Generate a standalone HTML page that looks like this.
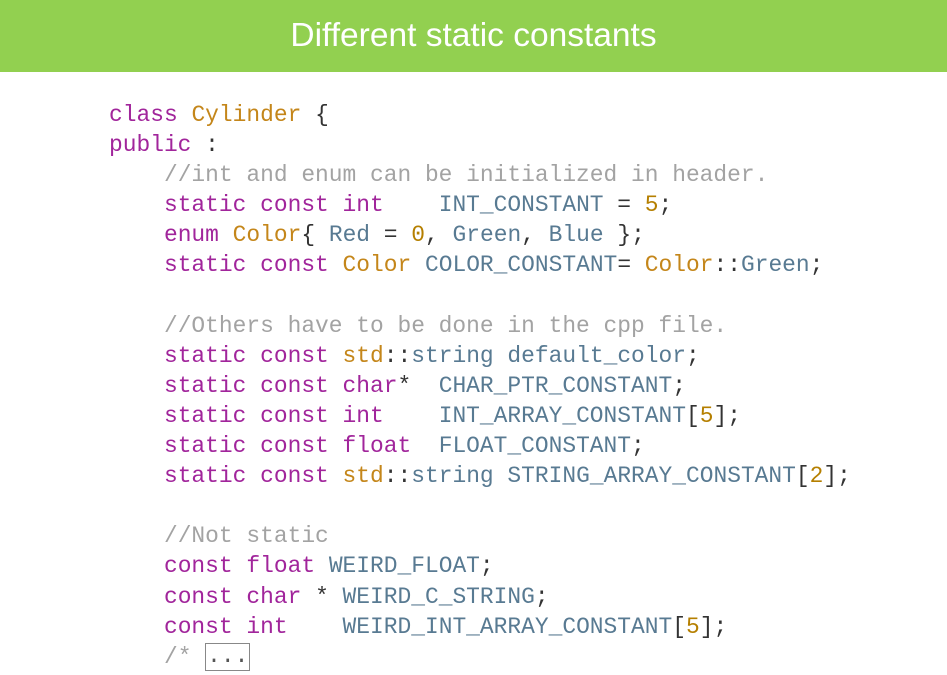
<!DOCTYPE html>
<html><head><meta charset="utf-8"><style>
body{margin:0;width:947px;height:675px;background:#fff;overflow:hidden;position:relative}
.h{position:absolute;left:0;top:0;width:947px;height:72px;background:#92d050;color:#fff;font:33.5px "Liberation Sans",sans-serif;text-align:center;line-height:72px}
pre{position:absolute;left:109px;top:100px;margin:0;font:22.9px/30.1px "Liberation Mono",monospace;color:#333}
.k{color:#a1259b}.t{color:#c4861a}.i{color:#587a92}.c{color:#a3a3a3}.n{color:#b57f00}
.b{display:inline-block;border:1px solid #888;height:26px;line-height:24px;vertical-align:middle;color:#555;padding:0 1px}
</style></head><body>
<div class="h">Different static constants</div>
<pre><span class="k">class</span> <span class="t">Cylinder</span> {
<span class="k">public</span> :
    <span class="c">//int and enum can be initialized in header.</span>
    <span class="k">static const int</span>    <span class="i">INT_CONSTANT</span> = <span class="n">5</span>;
    <span class="k">enum</span> <span class="t">Color</span>{ <span class="i">Red</span> = <span class="n">0</span>, <span class="i">Green</span>, <span class="i">Blue</span> };
    <span class="k">static const</span> <span class="t">Color</span> <span class="i">COLOR_CONSTANT</span>= <span class="t">Color</span>::<span class="i">Green</span>;

    <span class="c">//Others have to be done in the cpp file.</span>
    <span class="k">static const</span> <span class="t">std</span>::<span class="i">string</span> <span class="i">default_color</span>;
    <span class="k">static const char</span>*  <span class="i">CHAR_PTR_CONSTANT</span>;
    <span class="k">static const int</span>    <span class="i">INT_ARRAY_CONSTANT</span>[<span class="n">5</span>];
    <span class="k">static const float</span>  <span class="i">FLOAT_CONSTANT</span>;
    <span class="k">static const</span> <span class="t">std</span>::<span class="i">string</span> <span class="i">STRING_ARRAY_CONSTANT</span>[<span class="n">2</span>];

    <span class="c">//Not static</span>
    <span class="k">const float</span> <span class="i">WEIRD_FLOAT</span>;
    <span class="k">const char</span> * <span class="i">WEIRD_C_STRING</span>;
    <span class="k">const int</span>    <span class="i">WEIRD_INT_ARRAY_CONSTANT</span>[<span class="n">5</span>];
    <span class="c">/* </span><span class="b">...</span></pre>
</body></html>
